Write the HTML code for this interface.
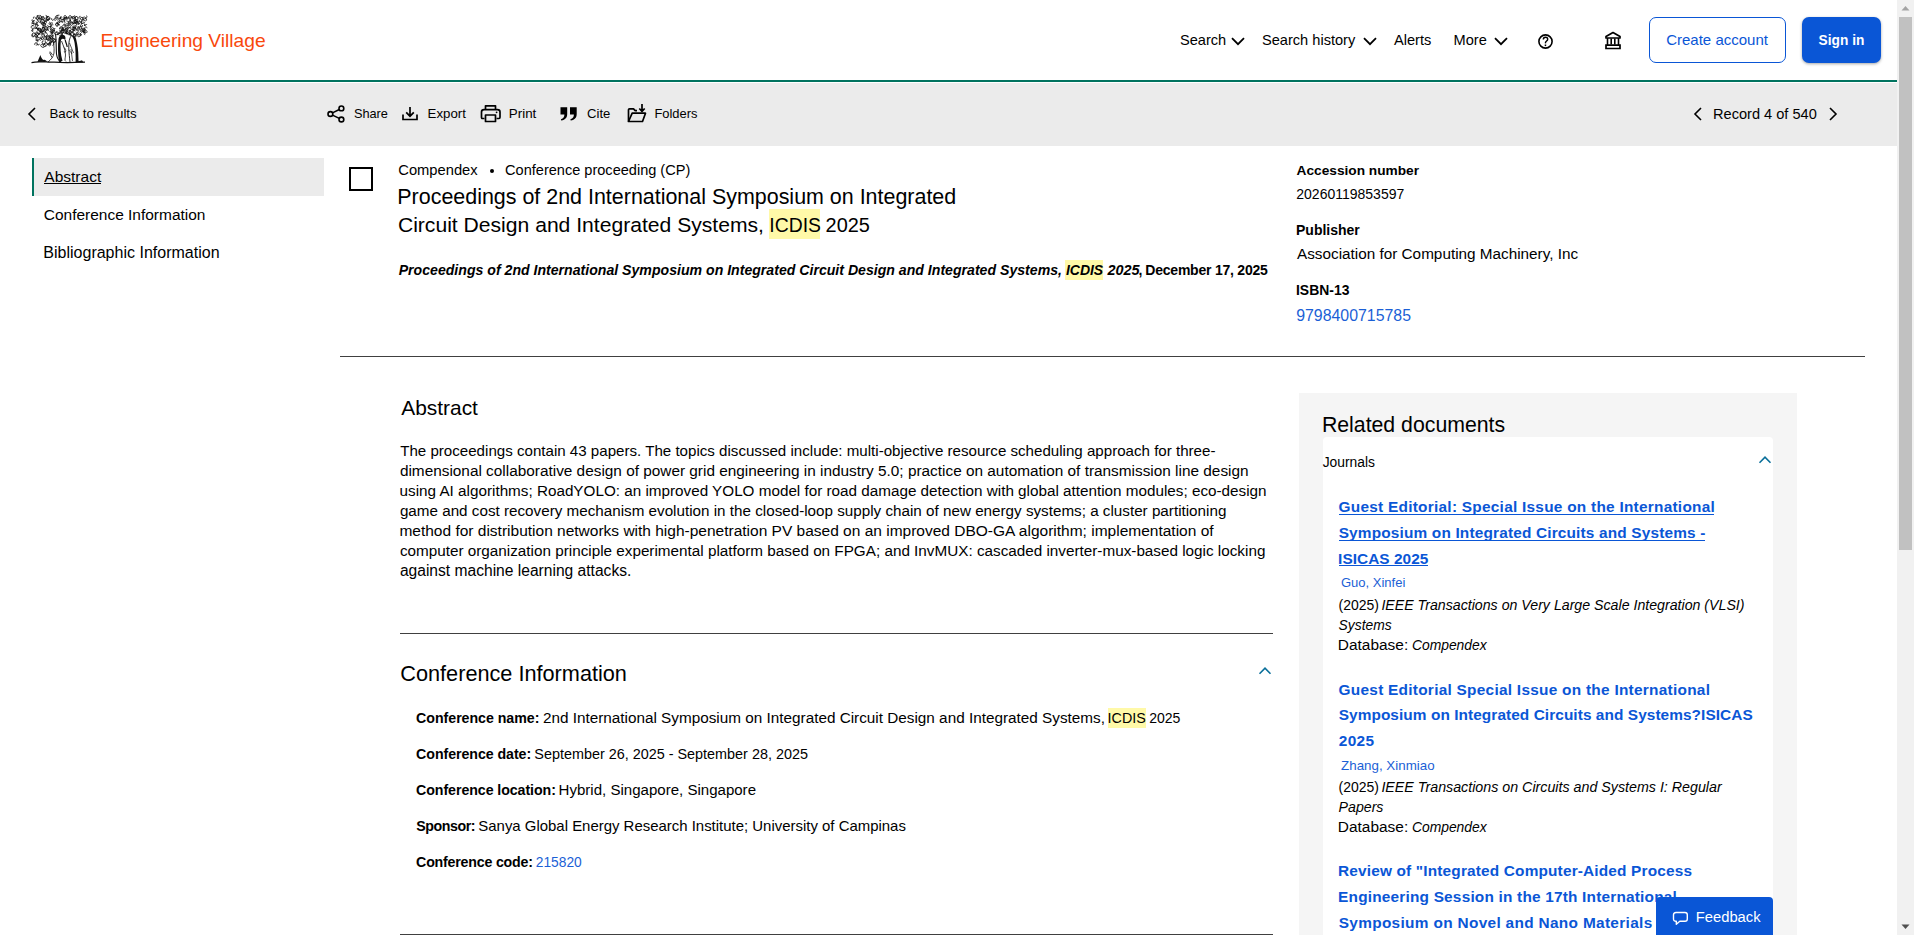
<!DOCTYPE html>
<html><head><meta charset="utf-8"><title>Engineering Village</title>
<style>
html,body{margin:0;padding:0;width:1914px;height:935px;overflow:hidden;background:#fff}
body{position:relative;font-family:"Liberation Sans",sans-serif;color:#000000}
.t{position:absolute;white-space:pre}
.r{position:absolute}
</style></head><body>
<div class="r" style="left:0px;top:80px;width:1897px;height:2px;background:#00735f"></div>
<div class="r" style="left:0px;top:83px;width:1897px;height:63px;background:#ebebeb"></div>
<svg class="r" style="left:30px;top:14px" width="60" height="52" viewBox="0 0 60 52">
<path d="M26.8 20.7A1.3 1.3 0 1 1 28.1 19.9M52.1 15.4A1.3 1.3 0 1 1 51.6 16.1M28.8 19.8A1.2 1.2 0 1 1 29.4 21.3M10.5 18.7A1.8 1.8 0 1 1 13.9 18.3M7.9 10.7A1.0 1.0 0 0 1 6.6 12.2M6.1 26.7A1.0 1.0 0 1 1 7.1 28.1M39.7 4.8A1.6 1.6 0 1 1 41.5 4.1M31.3 4.8A1.0 1.0 0 1 1 32.0 3.6M12.1 10.4A1.0 1.0 0 1 1 13.3 9.9M3.3 17.9A1.6 1.6 0 1 1 4.1 14.8M27.0 9.4A1.3 1.3 0 1 1 26.5 11.7M19.1 8.1A1.0 1.0 0 1 1 18.5 9.7M19.6 3.5A1.8 1.8 0 1 1 18.4 2.4M44.6 13.1A1.3 1.3 0 1 1 43.1 15.3M47.6 14.7A1.2 1.2 0 1 1 48.5 15.2M52.1 18.4A1.8 1.8 0 1 1 53.2 15.2M55.1 15.3A1.3 1.3 0 1 1 57.2 14.2M6.5 22.7A1.3 1.3 0 1 1 7.0 20.7M43.2 9.9A1.7 1.7 0 1 1 43.7 11.7M7.4 13.6A1.5 1.5 0 1 1 8.2 11.9M8.1 11.4A1.8 1.8 0 0 1 8.3 7.9M6.2 3.5A1.4 1.4 0 1 1 7.6 5.3M44.7 6.0A1.9 1.9 0 1 1 44.0 8.0M31.8 15.6A1.0 1.0 0 1 1 32.2 16.7M13.3 25.2A1.0 1.0 0 1 1 13.1 23.9M10.8 22.9A1.8 1.8 0 1 1 9.9 20.3M8.4 14.0A1.0 1.0 0 1 1 7.4 15.2M13.9 11.5A1.1 1.1 0 1 1 14.9 10.4M18.9 28.0A1.4 1.4 0 1 1 17.7 30.4M14.8 14.0A1.2 1.2 0 1 1 13.3 13.0M12.4 9.7A1.4 1.4 0 1 1 13.3 11.3M45.9 11.4A1.6 1.6 0 1 1 42.9 11.8M17.4 2.8A1.7 1.7 0 1 1 16.6 4.4M7.8 18.6A1.7 1.7 0 1 1 6.2 18.5M14.2 19.2A1.9 1.9 0 1 1 14.6 22.3M23.0 14.5A1.6 1.6 0 1 1 21.0 16.7M55.6 18.0A1.3 1.3 0 1 1 55.9 16.4M10.7 8.1A1.9 1.9 0 1 1 13.6 5.6M14.7 8.4A1.1 1.1 0 1 1 16.8 7.9M14.6 32.1A1.9 1.9 0 1 1 11.6 30.0M49.9 19.9A1.0 1.0 0 1 1 49.6 21.1M26.2 5.6A1.1 1.1 0 1 1 24.9 4.2M16.4 23.0A1.5 1.5 0 0 1 14.1 24.9M16.5 28.5A1.0 1.0 0 1 1 16.0 26.5M34.6 10.0A1.1 1.1 0 1 1 33.8 11.6M12.1 25.4A1.1 1.1 0 1 1 11.7 23.2M5.8 8.0A1.1 1.1 0 1 1 5.2 10.0M36.4 9.4A1.4 1.4 0 1 1 34.4 10.9M53.3 7.6A1.2 1.2 0 1 1 52.4 7.2M1.7 10.0A1.2 1.2 0 1 1 1.8 10.9M26.8 5.2A1.4 1.4 0 0 1 26.0 2.6M12.3 11.7A1.8 1.8 0 1 1 10.1 14.3M32.0 5.9A1.4 1.4 0 1 1 34.7 6.8M20.9 28.0A1.9 1.9 0 1 1 22.4 31.4M39.1 20.3A0.9 0.9 0 1 1 40.8 20.6M9.3 1.4A1.7 1.7 0 1 1 8.2 3.8M3.8 22.6A1.1 1.1 0 1 1 3.1 20.7M6.9 18.1A1.2 1.2 0 1 1 5.0 18.6M22.9 23.2A1.5 1.5 0 1 1 19.9 22.7M25.8 27.7A1.4 1.4 0 1 1 26.3 26.0M49.9 18.9A0.9 0.9 0 1 1 48.9 19.0M37.9 14.7A1.7 1.7 0 1 1 35.3 12.5M7.7 22.7A1.6 1.6 0 1 1 6.5 20.2M43.4 13.7A1.4 1.4 0 1 1 41.3 12.9M41.8 21.7A1.8 1.8 0 1 1 43.8 21.0M7.7 24.6A1.3 1.3 0 0 1 5.5 26.0M4.1 22.3A1.7 1.7 0 1 1 5.0 19.6M29.2 10.3A1.4 1.4 0 1 1 29.9 8.9M40.0 18.5A1.2 1.2 0 0 1 40.7 16.2M17.4 23.3A1.2 1.2 0 1 1 18.7 24.2M12.7 6.1A1.3 1.3 0 0 1 13.7 8.4M18.7 23.0A1.3 1.3 0 1 1 19.3 23.7M11.9 13.9A1.7 1.7 0 0 1 14.3 16.4M50.1 12.7A1.3 1.3 0 1 1 50.3 15.2M32.7 12.2A1.5 1.5 0 0 1 35.3 11.0M10.1 15.6A1.9 1.9 0 1 1 8.5 19.0M16.8 8.7A1.5 1.5 0 1 1 18.5 6.4M26.4 11.9A1.4 1.4 0 1 1 27.9 9.6M13.1 13.7A1.3 1.3 0 1 1 14.0 16.1M36.3 16.2A1.1 1.1 0 1 1 35.9 18.3M17.6 27.3A1.8 1.8 0 1 1 18.4 29.6M6.7 1.9A1.2 1.2 0 0 1 5.6 4.1M50.9 3.9A1.0 1.0 0 1 1 50.6 2.4M41.7 21.1A1.6 1.6 0 1 1 41.5 18.2M17.5 25.6A1.7 1.7 0 0 1 20.5 27.4M3.7 7.2A1.1 1.1 0 1 1 2.4 5.3M28.2 3.3A1.3 1.3 0 1 1 28.2 2.2M46.3 9.3A1.3 1.3 0 1 1 47.7 10.7M10.5 2.0A1.7 1.7 0 1 1 8.2 4.1M35.6 16.5A1.2 1.2 0 0 1 37.4 14.9M39.2 6.9A1.3 1.3 0 1 1 38.5 7.5M27.2 6.1A1.7 1.7 0 1 1 26.9 8.7M2.1 17.4A0.9 0.9 0 1 1 3.4 16.2M42.5 8.5A1.6 1.6 0 1 1 41.0 6.0M17.3 11.3A1.4 1.4 0 1 1 15.8 11.9M41.2 19.4A1.5 1.5 0 1 1 41.8 17.6M21.9 26.0A1.8 1.8 0 1 1 24.7 28.0M52.7 5.8A1.4 1.4 0 1 1 53.0 3.9M7.3 15.9A1.9 1.9 0 1 1 8.8 17.9M23.3 21.3A1.7 1.7 0 1 1 24.3 20.3M54.4 17.8A1.5 1.5 0 0 1 53.3 15.0M36.8 7.8A1.1 1.1 0 1 1 37.3 9.3M14.8 29.4A1.2 1.2 0 1 1 12.5 29.6M20.6 31.2A1.4 1.4 0 1 1 21.0 30.2M49.9 12.2A1.0 1.0 0 1 1 48.2 12.2M5.2 15.1A1.5 1.5 0 1 1 7.6 16.7M30.6 2.8A1.8 1.8 0 1 1 29.4 1.2M47.6 5.0A1.5 1.5 0 1 1 47.9 3.4M46.9 6.6A1.2 1.2 0 1 1 44.9 7.7M21.1 25.1A1.5 1.5 0 1 1 19.5 27.6M11.0 7.3A1.4 1.4 0 0 1 8.3 6.3M55.1 17.2A1.1 1.1 0 1 1 54.7 16.4M53.7 6.1A1.6 1.6 0 1 1 55.7 5.2M13.0 19.4A1.6 1.6 0 1 1 15.6 19.2M19.7 24.8A1.7 1.7 0 1 1 16.3 24.1M38.0 19.3A1.4 1.4 0 1 1 37.2 16.8M49.1 20.7A1.5 1.5 0 1 1 49.3 18.2M18.1 13.3A1.2 1.2 0 1 1 19.8 14.8M15.0 28.7A1.5 1.5 0 1 1 13.8 26.9M56.3 18.0A1.0 1.0 0 1 1 54.8 17.3M32.4 9.0A1.4 1.4 0 1 1 34.4 9.3M31.6 16.0A1.6 1.6 0 1 1 29.9 17.2M36.7 2.8A1.4 1.4 0 1 1 35.8 1.6M53.8 18.9A1.8 1.8 0 1 1 57.0 18.5M25.2 26.0A1.5 1.5 0 1 1 22.8 26.1M31.7 17.8A1.4 1.4 0 1 1 32.7 18.6M41.2 4.5A1.2 1.2 0 1 1 40.5 3.0M31.4 13.0A1.8 1.8 0 1 1 29.9 15.5M16.3 18.2A1.7 1.7 0 1 1 18.5 16.8M9.7 16.1A1.0 1.0 0 1 1 9.1 14.5M27.1 12.7A1.4 1.4 0 0 1 29.1 10.8M11.0 20.9A1.6 1.6 0 1 1 13.9 21.9M51.9 6.8A1.2 1.2 0 1 1 54.0 5.6M45.7 2.2A1.0 1.0 0 1 1 45.1 1.8M13.7 7.9A1.6 1.6 0 1 1 11.1 9.1M40.1 13.7A1.7 1.7 0 1 1 41.5 12.0M22.7 20.4A1.5 1.5 0 0 1 20.4 22.1M9.0 25.8A1.7 1.7 0 1 1 8.4 23.1M10.6 17.8A1.9 1.9 0 1 1 7.0 17.2M15.2 9.2A1.2 1.2 0 0 1 16.1 7.0M31.9 13.9A1.8 1.8 0 1 1 29.5 16.2M21.6 14.2A1.3 1.3 0 0 1 23.9 15.2M31.9 6.4A0.9 0.9 0 1 1 30.2 7.1M14.5 21.0A1.4 1.4 0 1 1 13.8 20.3M37.5 19.7A1.4 1.4 0 1 1 37.4 17.1M50.3 19.9A1.8 1.8 0 1 1 47.2 21.7M48.1 10.6A1.7 1.7 0 1 1 50.9 9.3M52.4 11.1A1.1 1.1 0 1 1 51.8 10.7M18.6 29.8A1.1 1.1 0 1 1 19.9 31.5M52.5 6.7A1.8 1.8 0 0 1 49.1 5.7M14.5 26.0A1.6 1.6 0 1 1 16.0 25.9M15.9 3.3A1.8 1.8 0 1 1 16.6 6.7M49.2 14.5A1.6 1.6 0 1 1 46.4 14.3M45.6 6.9A1.0 1.0 0 1 1 45.8 5.0M24.7 24.8A1.6 1.6 0 1 1 23.9 21.7M2.4 7.3A1.1 1.1 0 1 1 1.9 8.5M54.6 4.5A1.3 1.3 0 1 1 54.0 5.6M12.6 5.7A1.5 1.5 0 1 1 12.9 2.8M6.9 1.6A1.8 1.8 0 1 1 8.0 5.0M33.6 18.8A1.5 1.5 0 1 1 33.9 17.7M32.0 6.3A1.3 1.3 0 1 1 33.6 7.8M11.4 7.8A0.9 0.9 0 1 1 12.6 9.2M53.4 3.9A1.2 1.2 0 0 1 52.7 6.1M20.0 15.3A1.2 1.2 0 1 1 19.5 17.6M29.2 15.0A1.2 1.2 0 1 1 31.4 15.9M13.8 15.9A1.8 1.8 0 0 1 10.3 16.7M42.7 13.2A1.4 1.4 0 1 1 41.7 15.6M10.9 7.1A1.8 1.8 0 1 1 14.5 7.4M35.7 13.4A1.5 1.5 0 1 1 36.6 16.0M35.3 16.1A1.6 1.6 0 1 1 33.5 18.0M17.0 29.1A1.4 1.4 0 1 1 15.0 29.5M48.2 14.1A1.4 1.4 0 1 1 45.4 14.8M44.9 16.0A1.7 1.7 0 1 1 45.3 13.4M40.7 4.6A1.1 1.1 0 1 1 41.9 5.3M21.2 14.9A1.7 1.7 0 1 1 19.9 17.9M2.8 14.4A1.4 1.4 0 1 1 3.8 12.4M16.1 31.6A1.4 1.4 0 1 1 14.7 29.9M37.2 11.8A1.6 1.6 0 1 1 37.3 13.4M38.9 20.5A1.1 1.1 0 0 1 37.4 19.0M30.0 14.6A1.4 1.4 0 1 1 32.6 14.7M56.3 1.6A1.2 1.2 0 0 1 55.7 3.9M14.5 13.7A1.8 1.8 0 1 1 16.0 16.3M4.9 9.7A1.7 1.7 0 1 1 4.8 6.4M23.8 5.4A1.2 1.2 0 1 1 21.8 4.2M14.3 29.8A1.5 1.5 0 1 1 17.1 30.9M33.5 18.5A1.5 1.5 0 1 1 33.5 16.9M55.2 20.7A1.1 1.1 0 1 1 55.3 18.5M47.3 3.0A1.6 1.6 0 1 1 45.4 3.2M10.0 17.1A1.0 1.0 0 1 1 11.8 16.7M12.4 17.2A1.1 1.1 0 0 1 10.3 17.8M35.7 2.4A1.4 1.4 0 1 1 34.8 2.7M53.0 15.3A1.0 1.0 0 1 1 54.1 16.1M22.2 11.8A0.9 0.9 0 1 1 22.9 11.3M37.2 20.0A1.0 1.0 0 1 1 39.1 19.2M18.8 24.8A1.3 1.3 0 0 1 16.3 23.9M15.6 1.4A1.9 1.9 0 1 1 13.6 2.9M10.6 26.5A1.1 1.1 0 1 1 11.7 25.0M42.1 3.8A1.1 1.1 0 1 1 42.7 4.6M5.4 31.2A1.3 1.3 0 1 1 6.3 31.3M27.1 17.2A1.5 1.5 0 1 1 24.9 15.5M57.0 10.1A1.5 1.5 0 1 1 54.7 8.3M42.8 15.3A1.6 1.6 0 1 1 40.3 15.8M33.5 6.0A1.8 1.8 0 1 1 36.7 6.5M35.1 17.3A1.7 1.7 0 1 1 37.1 17.7M12.6 4.5A1.1 1.1 0 1 1 14.0 2.8M31.8 7.1A1.4 1.4 0 1 1 30.6 4.5M26.0 10.4A1.1 1.1 0 1 1 28.1 10.5M35.4 14.9A1.3 1.3 0 1 1 33.9 13.7M45.3 20.1A1.8 1.8 0 1 1 45.5 16.9M42.0 8.5A1.0 1.0 0 1 1 42.1 10.3M9.4 29.8A1.2 1.2 0 1 1 7.1 29.3M44.2 22.1A1.2 1.2 0 1 1 45.1 22.5M21.6 12.0A1.6 1.6 0 1 1 22.9 9.3M40.6 19.1A1.1 1.1 0 1 1 38.7 19.2M43.2 6.2A1.7 1.7 0 1 1 41.9 7.1M3.8 4.7A0.9 0.9 0 1 1 5.0 3.5M17.6 14.5A1.0 1.0 0 1 1 15.9 15.3M34.6 5.0A1.7 1.7 0 0 1 38.0 5.1M31.9 5.5A1.3 1.3 0 0 1 31.4 3.0M5.9 22.4A1.1 1.1 0 0 1 7.7 23.3M21.4 17.4A1.2 1.2 0 1 1 23.4 17.6M13.3 11.7A1.0 1.0 0 1 1 13.5 13.7M5.3 4.3A1.6 1.6 0 1 1 6.8 7.2M46.3 22.4A1.1 1.1 0 1 1 47.6 21.6M43.3 9.5A1.3 1.3 0 1 1 44.5 9.9" fill="none" stroke="#111" stroke-width="0.8"/>
<g fill="#111"><circle cx="15.0" cy="11.2" r="0.7"/><circle cx="14.4" cy="4.1" r="0.5"/><circle cx="36.4" cy="18.8" r="0.9"/><circle cx="54.7" cy="11.3" r="0.8"/><circle cx="51.7" cy="9.1" r="0.8"/><circle cx="49.0" cy="9.6" r="0.8"/><circle cx="7.8" cy="15.0" r="0.7"/><circle cx="6.2" cy="13.7" r="0.7"/><circle cx="29.3" cy="10.8" r="0.6"/><circle cx="24.3" cy="16.3" r="0.6"/><circle cx="38.3" cy="9.7" r="0.5"/><circle cx="21.1" cy="14.8" r="0.6"/><circle cx="4.2" cy="14.0" r="0.7"/><circle cx="6.3" cy="14.3" r="0.5"/><circle cx="29.3" cy="19.4" r="0.7"/><circle cx="20.3" cy="10.1" r="0.5"/><circle cx="21.4" cy="28.0" r="0.8"/><circle cx="16.9" cy="21.7" r="0.6"/><circle cx="27.9" cy="20.2" r="1.0"/><circle cx="22.2" cy="19.1" r="1.0"/><circle cx="43.9" cy="20.6" r="0.8"/><circle cx="24.8" cy="14.6" r="0.6"/><circle cx="23.2" cy="28.5" r="0.5"/><circle cx="10.2" cy="17.2" r="0.7"/><circle cx="10.9" cy="8.4" r="0.6"/><circle cx="39.0" cy="9.6" r="0.5"/><circle cx="31.8" cy="14.0" r="0.6"/><circle cx="32.1" cy="20.5" r="0.8"/><circle cx="20.7" cy="12.7" r="0.9"/><circle cx="19.6" cy="23.0" r="0.8"/><circle cx="46.7" cy="7.5" r="0.8"/><circle cx="29.0" cy="18.8" r="0.7"/><circle cx="18.1" cy="24.0" r="0.8"/><circle cx="15.6" cy="10.0" r="0.7"/><circle cx="12.4" cy="17.4" r="0.6"/><circle cx="6.4" cy="4.9" r="0.6"/><circle cx="40.4" cy="6.2" r="0.7"/><circle cx="43.9" cy="16.5" r="0.6"/><circle cx="5.8" cy="10.1" r="0.8"/><circle cx="45.2" cy="14.0" r="0.9"/><circle cx="16.3" cy="23.0" r="0.7"/><circle cx="20.7" cy="24.3" r="0.9"/><circle cx="46.9" cy="18.9" r="0.7"/><circle cx="40.5" cy="20.4" r="0.9"/><circle cx="45.5" cy="6.5" r="0.7"/></g>
<g fill="none" stroke="#111">
<path d="M25.5 20 C26.5 26 26 34 26.5 40 C27 44 28.5 46.5 31 48" stroke-width="1.1"/>
<path d="M22 22 C23.5 28 24.5 33 24 39 C23.5 43 21 45.5 18 48" stroke-width="0.8"/>
<path d="M19.5 38.5 L22 43.5 M22.5 41 L20 37.5" stroke-width="0.8"/>
<path d="M29 48 C27.8 40 27.6 31 28.6 24.5 C29.3 21 32 19.8 34.2 21.3 C35.6 22.4 35.8 24.5 35.2 26 C33 24 31.2 24.5 30.8 27 C30.2 33 30.5 40 32.5 47 Z" fill="#111" stroke="none"/>
<path d="M35.2 26 C36 29 37 31 37.2 33" stroke-width="1.2"/>
<path d="M31.5 27 C33 31 35.5 36 35.5 41 C35.5 44 34 46.5 36 47.5" stroke-width="0.8"/>
<path d="M33.5 33 C35 34 36.5 36 35.5 38 C34.5 38.8 33.8 37.8 34.6 37.2" stroke-width="0.7"/>
<path d="M41.5 21.5 C44 20.8 45.8 22.5 46.2 25.5 C47.6 31 48.4 37 48.4 43 L48.6 48 L45.6 48 C45.8 42 45.6 35 44.6 29 C44.2 26 43.2 24 41.5 21.5 Z" fill="#111" stroke="none"/>
<path d="M41.5 21.5 C39.2 24 38.6 29 38.8 34 C39 39 39.5 44 40 48" stroke-width="0.9"/>
<path d="M39.5 29 L43.5 39 M41 35 L42.5 47 M38.5 36 C40 37 41 38 42 40" stroke-width="0.7"/>
<path d="M1.5 48.6 C6 47.6 10 48 14 47.6 C20 48.4 26 48 30 48.4 C38 48.8 48 48.4 55 48.1" stroke-width="1.2"/>
</g>
<path d="M7.5 48 C8.5 45 9.5 43 10.5 41 C11 43.5 12 45 13.5 46 C15 45 16 46.5 17.5 47.5 Z" fill="#111"/>
<path d="M46.5 48 C48 46.5 50 47.2 52 46.2 L53.5 48.4 Z" fill="#111"/>
</svg>

<svg class="r" style="left:1231px;top:36.7px" width="14" height="9" viewBox="0 0 14 9"><path d="M1 1.2 L7 7.2 L13 1.2" fill="none" stroke="#000000" stroke-width="1.8"/></svg>
<svg class="r" style="left:1363px;top:36.7px" width="14" height="9" viewBox="0 0 14 9"><path d="M1 1.2 L7 7.2 L13 1.2" fill="none" stroke="#000000" stroke-width="1.8"/></svg>
<svg class="r" style="left:1494px;top:36.7px" width="14" height="9" viewBox="0 0 14 9"><path d="M1 1.2 L7 7.2 L13 1.2" fill="none" stroke="#000000" stroke-width="1.8"/></svg>
<svg class="r" style="left:1536px;top:32px" width="19" height="19" viewBox="0 0 19 19"><circle cx="9.5" cy="9.5" r="6.6" fill="none" stroke="#000000" stroke-width="1.6"/><path d="M7.3 7.4 C7.3 5.9 8.3 5.2 9.5 5.2 C10.8 5.2 11.7 6 11.7 7.2 C11.7 8.6 10.1 9 9.6 10.2 L9.4 11.4" fill="none" stroke="#000000" stroke-width="1.4"/><rect x="8.7" y="12.5" width="1.5" height="1.6" fill="#000000"/></svg>
<svg class="r" style="left:1604px;top:31px" width="18" height="19" viewBox="0 0 18 19"><path d="M9 1.5 L16 5.6 L16 7 L2 7 L2 5.6 Z" fill="none" stroke="#000000" stroke-width="1.7" stroke-linejoin="round"/><path d="M3.5 7 V14 M14.5 7 V14 M7.2 7.5 V13.5 M10.8 7.5 V13.5" stroke="#000000" stroke-width="1.6"/><path d="M2 14.2 H16 V17.5 H2 Z" fill="none" stroke="#000000" stroke-width="1.7"/></svg>
<div class="r" style="left:1649px;top:17px;width:137px;height:46px;border:1px solid #0a56d6;border-radius:7px;box-sizing:border-box;background:#fff"></div>
<div class="r" style="left:1802px;top:17px;width:79px;height:46px;background:#0a56d6;border-radius:7px;box-shadow:0 1px 3px rgba(0,0,0,.35)"></div>
<svg class="r" style="left:27px;top:107px" width="10" height="14" viewBox="0 0 10 14"><path d="M8 1 L2 7 L8 13" fill="none" stroke="#000000" stroke-width="1.6"/></svg>
<svg class="r" style="left:326px;top:104px" width="20" height="20" viewBox="0 0 20 20"><g fill="none" stroke="#000000" stroke-width="1.6"><circle cx="15.4" cy="4.4" r="2.4"/><circle cx="4.4" cy="10" r="2.4"/><circle cx="15.4" cy="15.5" r="2.4"/><path d="M6.5 8.9 L13.3 5.5 M6.5 11.1 L13.3 14.4"/></g></svg>
<svg class="r" style="left:401px;top:106px" width="18" height="16" viewBox="0 0 18 16"><g fill="none" stroke="#000000" stroke-width="1.7"><path d="M2 8.5 V13.5 H16 V8.5"/><path d="M9 1 V10 M5.2 6.4 L9 10.2 L12.8 6.4"/></g></svg>
<svg class="r" style="left:480px;top:104px" width="22" height="19" viewBox="0 0 22 19"><g fill="none" stroke="#000000" stroke-width="1.7" stroke-linejoin="round"><path d="M5.5 5.5 V1.8 H15.5 V5.5"/><path d="M4.5 14.5 H2.5 C1.8 14.5 1.5 14 1.5 13.3 V8 C1.5 6.5 2.5 5.6 4 5.6 H17.5 C19 5.6 20 6.5 20 8 V13.3 C20 14 19.6 14.5 19 14.5 H16.5"/><path d="M5.5 11 H15.5 V17.5 H5.5 Z"/></g><circle cx="16.6" cy="8.3" r="0.9" fill="#000000"/></svg>
<svg class="r" style="left:559px;top:106px" width="20" height="16" viewBox="0 0 20 16"><path d="M1.5 1.3 H8.2 V8 C8.2 11.7 6.5 13.6 2.2 14.6 L1.9 13.2 C4.5 12.5 5.3 11.2 5.4 8.6 H1.5 Z M11 1.3 H17.7 V8 C17.7 11.7 16 13.6 11.7 14.6 L11.4 13.2 C14 12.5 14.8 11.2 14.9 8.6 H11 Z" fill="#000000"/></svg>
<svg class="r" style="left:626px;top:103px" width="22" height="21" viewBox="0 0 22 21"><g fill="none" stroke="#000000" stroke-width="1.7" stroke-linejoin="round"><path d="M2.5 18.5 V6.8 C2.5 6.2 2.9 5.8 3.5 5.8 H7.5 L9.2 7.6 H11"/><path d="M2.5 18.5 H16.5 L19.5 10.2 H6.2 Z"/><path d="M16 1 V8.2 M13.3 5.5 L16 8.3 L18.7 5.5"/></g></svg>
<svg class="r" style="left:1693px;top:106.5px" width="10" height="14" viewBox="0 0 10 14"><path d="M8 1 L2 7 L8 13" fill="none" stroke="#000000" stroke-width="1.6"/></svg>
<svg class="r" style="left:1828px;top:106.5px" width="10" height="14" viewBox="0 0 10 14"><path d="M2 1 L8 7 L2 13" fill="none" stroke="#000000" stroke-width="1.6"/></svg>
<div class="r" style="left:32px;top:158px;width:292px;height:38px;background:#ebebeb;border-left:2px solid #00735f;box-sizing:border-box"></div>
<div class="r" style="left:44px;top:183px;width:57px;height:1px;background:#000000"></div>
<div class="r" style="left:349px;top:167px;width:24px;height:24px;border:2px solid #000000;box-sizing:border-box"></div>
<div class="r" style="left:490px;top:168.5px;width:4px;height:4px;border-radius:2px;background:#000000"></div>
<div class="r" style="left:769px;top:209px;width:51px;height:30px;background:#fff9a8"></div>
<div class="r" style="left:1065px;top:260px;width:38px;height:20px;background:#fff9a8"></div>
<div class="r" style="left:340px;top:356px;width:1525px;height:1px;background:#404040"></div>
<div class="r" style="left:400px;top:633px;width:873px;height:1px;background:#404040"></div>
<svg class="r" style="left:1257px;top:665px" width="16" height="10" viewBox="0 0 16 10"><path d="M2.5 8.7 L8 3.2 L13.5 8.7" fill="none" stroke="#0a6f9a" stroke-width="1.6"/></svg>
<div class="r" style="left:1108px;top:708px;width:38px;height:20px;background:#fff9a8"></div>
<div class="r" style="left:400px;top:934px;width:873px;height:1px;background:#404040"></div>
<div class="r" style="left:1299px;top:393px;width:498px;height:542px;background:#f5f5f5"></div>
<div class="r" style="left:1323px;top:437px;width:450px;height:498px;background:#fff;border-radius:4px 4px 0 0"></div>
<svg class="r" style="left:1757px;top:454px" width="16" height="10" viewBox="0 0 16 10"><path d="M2.5 8.7 L8 3.2 L13.5 8.7" fill="none" stroke="#0a6f9a" stroke-width="1.6"/></svg>
<div class="r" style="left:1339px;top:514px;width:375px;height:1px;background:#0a56d6"></div>
<div class="r" style="left:1339px;top:540px;width:366px;height:1px;background:#0a56d6"></div>
<div class="r" style="left:1339px;top:565px;width:89px;height:1px;background:#0a56d6"></div>
<div class="t" style="left:100.5px;top:26px;font-size:19.22px;line-height:30px;font-weight:400;font-style:normal;color:#f9480c;">Engineering Village</div>
<div class="t" style="left:1180.0px;top:25px;font-size:14.60px;line-height:30px;font-weight:400;font-style:normal;color:#000000;">Search</div>
<div class="t" style="left:1262.0px;top:25px;font-size:14.60px;line-height:30px;font-weight:400;font-style:normal;color:#000000;">Search history</div>
<div class="t" style="left:1394.0px;top:25px;font-size:14.60px;line-height:30px;font-weight:400;font-style:normal;color:#000000;">Alerts</div>
<div class="t" style="left:1453.5px;top:25px;font-size:14.60px;line-height:30px;font-weight:400;font-style:normal;color:#000000;">More</div>
<div class="t" style="left:1666.2px;top:25px;font-size:15.01px;line-height:30px;font-weight:400;font-style:normal;color:#0a56d6;">Create account</div>
<div class="t" style="left:1818.6px;top:26px;font-size:13.73px;line-height:30px;font-weight:700;font-style:normal;color:#fff;">Sign in</div>
<div class="t" style="left:49.5px;top:99px;font-size:13.31px;line-height:30px;font-weight:400;font-style:normal;color:#000000;">Back to results</div>
<div class="t" style="left:353.9px;top:99px;font-size:12.75px;line-height:30px;font-weight:400;font-style:normal;color:#000000;">Share</div>
<div class="t" style="left:427.6px;top:99px;font-size:13.25px;line-height:30px;font-weight:400;font-style:normal;color:#000000;">Export</div>
<div class="t" style="left:508.8px;top:99px;font-size:13.40px;line-height:30px;font-weight:400;font-style:normal;color:#000000;">Print</div>
<div class="t" style="left:587.1px;top:99px;font-size:13.08px;line-height:30px;font-weight:400;font-style:normal;color:#000000;">Cite</div>
<div class="t" style="left:654.4px;top:99px;font-size:12.92px;line-height:30px;font-weight:400;font-style:normal;color:#000000;">Folders</div>
<div class="t" style="left:1713.0px;top:99px;font-size:14.59px;line-height:30px;font-weight:400;font-style:normal;color:#000000;">Record 4 of 540</div>
<div class="t" style="left:44.3px;top:162px;font-size:15.52px;line-height:30px;font-weight:400;font-style:normal;color:#000000;">Abstract</div>
<div class="t" style="left:43.8px;top:200px;font-size:15.48px;line-height:30px;font-weight:400;font-style:normal;color:#000000;">Conference Information</div>
<div class="t" style="left:43.3px;top:237px;font-size:16.02px;line-height:30px;font-weight:400;font-style:normal;color:#000000;">Bibliographic Information</div>
<div class="t" style="left:398.3px;top:155px;font-size:14.73px;line-height:30px;font-weight:400;font-style:normal;color:#000000;">Compendex</div>
<div class="t" style="left:505.1px;top:155px;font-size:14.56px;line-height:30px;font-weight:400;font-style:normal;color:#000000;">Conference proceeding (CP)</div>
<div class="t" style="left:397.3px;top:182px;font-size:21.44px;line-height:30px;font-weight:400;font-style:normal;color:#000000;">Proceedings of 2nd International Symposium on Integrated</div>
<div class="t" style="left:397.9px;top:210px;font-size:21.12px;line-height:30px;font-weight:400;font-style:normal;color:#000000;">Circuit Design and Integrated Systems,</div>
<div class="t" style="left:769.3px;top:210px;font-size:19.37px;line-height:30px;font-weight:400;font-style:normal;color:#000000;">ICDIS</div>
<div class="t" style="left:825.6px;top:210px;font-size:19.91px;line-height:30px;font-weight:400;font-style:normal;color:#000000;">2025</div>
<div class="t" style="left:398.7px;top:255px;font-size:14.11px;line-height:30px;font-weight:700;font-style:italic;color:#000000;">Proceedings of 2nd International Symposium on Integrated Circuit Design and Integrated Systems,</div>
<div class="t" style="left:1065.9px;top:255px;font-size:13.99px;line-height:30px;font-weight:700;font-style:italic;color:#000000;">ICDIS</div>
<div class="t" style="left:1107.4px;top:255px;font-size:14.42px;line-height:30px;font-weight:700;font-style:italic;color:#000000;">2025</div>
<div class="t" style="left:1138.5px;top:255px;font-size:14.00px;line-height:30px;font-weight:700;font-style:normal;color:#000000;">,</div>
<div class="t" style="left:1145.3px;top:255px;font-size:14.00px;line-height:30px;font-weight:700;font-style:normal;color:#000000;letter-spacing:-0.221px;">December 17, 2025</div>
<div class="t" style="left:1296.6px;top:156px;font-size:13.69px;line-height:30px;font-weight:700;font-style:normal;color:#000000;">Accession number</div>
<div class="t" style="left:1296.3px;top:179px;font-size:14.01px;line-height:30px;font-weight:400;font-style:normal;color:#000000;">20260119853597</div>
<div class="t" style="left:1296.0px;top:215px;font-size:14.00px;line-height:30px;font-weight:700;font-style:normal;color:#000000;">Publisher</div>
<div class="t" style="left:1297.0px;top:239px;font-size:15.31px;line-height:30px;font-weight:400;font-style:normal;color:#000000;">Association for Computing Machinery, Inc</div>
<div class="t" style="left:1296.0px;top:275px;font-size:13.94px;line-height:30px;font-weight:700;font-style:normal;color:#000000;">ISBN-13</div>
<div class="t" style="left:1296.2px;top:301px;font-size:15.88px;line-height:30px;font-weight:400;font-style:normal;color:#1b5fd6;">9798400715785</div>
<div class="t" style="left:401.2px;top:393px;font-size:20.93px;line-height:30px;font-weight:400;font-style:normal;color:#000000;">Abstract</div>
<div class="t" style="left:400.2px;top:436px;font-size:15.11px;line-height:30px;font-weight:400;font-style:normal;color:#000000;">The proceedings contain 43 papers. The topics discussed include: multi-objective resource scheduling approach for three-</div>
<div class="t" style="left:399.9px;top:456px;font-size:15.37px;line-height:30px;font-weight:400;font-style:normal;color:#000000;">dimensional collaborative design of power grid engineering in industry 5.0; practice on automation of transmission line design</div>
<div class="t" style="left:399.6px;top:476px;font-size:15.26px;line-height:30px;font-weight:400;font-style:normal;color:#000000;">using AI algorithms; RoadYOLO: an improved YOLO model for road damage detection with global attention modules; eco-design</div>
<div class="t" style="left:399.9px;top:496px;font-size:15.22px;line-height:30px;font-weight:400;font-style:normal;color:#000000;">game and cost recovery mechanism evolution in the closed-loop supply chain of new energy systems; a cluster partitioning</div>
<div class="t" style="left:399.4px;top:516px;font-size:15.51px;line-height:30px;font-weight:400;font-style:normal;color:#000000;">method for distribution networks with high-penetration PV based on an improved DBO-GA algorithm; implementation of</div>
<div class="t" style="left:399.9px;top:536px;font-size:15.27px;line-height:30px;font-weight:400;font-style:normal;color:#000000;">computer organization principle experimental platform based on FPGA; and InvMUX: cascaded inverter-mux-based logic locking</div>
<div class="t" style="left:399.9px;top:556px;font-size:15.60px;line-height:30px;font-weight:400;font-style:normal;color:#000000;">against machine learning attacks.</div>
<div class="t" style="left:400.3px;top:659px;font-size:21.70px;line-height:30px;font-weight:400;font-style:normal;color:#000000;">Conference Information</div>
<div class="t" style="left:416.1px;top:703px;font-size:14.20px;line-height:30px;font-weight:700;font-style:normal;color:#000000;letter-spacing:-0.032px;">Conference name:</div>
<div class="t" style="left:542.9px;top:703px;font-size:15.30px;line-height:30px;font-weight:400;font-style:normal;color:#000000;">2nd International Symposium on Integrated Circuit Design and Integrated Systems,</div>
<div class="t" style="left:1107.6px;top:703px;font-size:14.31px;line-height:30px;font-weight:400;font-style:normal;color:#000000;">ICDIS</div>
<div class="t" style="left:1149.2px;top:703px;font-size:14.04px;line-height:30px;font-weight:400;font-style:normal;color:#000000;">2025</div>
<div class="t" style="left:416.1px;top:739px;font-size:14.20px;line-height:30px;font-weight:700;font-style:normal;color:#000000;letter-spacing:-0.055px;">Conference date:</div>
<div class="t" style="left:534.3px;top:739px;font-size:14.40px;line-height:30px;font-weight:400;font-style:normal;color:#000000;">September 26, 2025 - September 28, 2025</div>
<div class="t" style="left:416.1px;top:775px;font-size:14.20px;line-height:30px;font-weight:700;font-style:normal;color:#000000;letter-spacing:-0.069px;">Conference location:</div>
<div class="t" style="left:558.6px;top:775px;font-size:15.05px;line-height:30px;font-weight:400;font-style:normal;color:#000000;">Hybrid, Singapore, Singapore</div>
<div class="t" style="left:416.3px;top:811px;font-size:14.20px;line-height:30px;font-weight:700;font-style:normal;color:#000000;letter-spacing:-0.427px;">Sponsor:</div>
<div class="t" style="left:478.3px;top:811px;font-size:14.94px;line-height:30px;font-weight:400;font-style:normal;color:#000000;">Sanya Global Energy Research Institute; University of Campinas</div>
<div class="t" style="left:416.1px;top:847px;font-size:14.20px;line-height:30px;font-weight:700;font-style:normal;color:#000000;letter-spacing:-0.200px;">Conference code:</div>
<div class="t" style="left:535.8px;top:848px;font-size:13.78px;line-height:30px;font-weight:400;font-style:normal;color:#1b5fd6;">215820</div>
<div class="t" style="left:1321.9px;top:410px;font-size:21.28px;line-height:30px;font-weight:400;font-style:normal;color:#000000;">Related documents</div>
<div class="t" style="left:1322.7px;top:447px;font-size:13.84px;line-height:30px;font-weight:400;font-style:normal;color:#000000;">Journals</div>
<div class="t" style="left:1338.6px;top:492px;font-size:15.40px;line-height:30px;font-weight:700;font-style:normal;color:#0a56d6;letter-spacing:0.255px;">Guest Editorial: Special Issue on the International</div>
<div class="t" style="left:1338.7px;top:518px;font-size:15.40px;line-height:30px;font-weight:700;font-style:normal;color:#0a56d6;letter-spacing:0.165px;">Symposium on Integrated Circuits and Systems -</div>
<div class="t" style="left:1338.1px;top:544px;font-size:15.40px;line-height:30px;font-weight:700;font-style:normal;color:#0a56d6;letter-spacing:0.040px;">ISICAS 2025</div>
<div class="t" style="left:1340.9px;top:568px;font-size:13.04px;line-height:30px;font-weight:400;font-style:normal;color:#1b5fd6;">Guo, Xinfei</div>
<div class="t" style="left:1338.5px;top:590px;font-size:13.97px;line-height:30px;font-weight:400;font-style:normal;color:#000000;">(2025)</div>
<div class="t" style="left:1381.4px;top:590px;font-size:14.18px;line-height:30px;font-weight:400;font-style:italic;color:#000000;">IEEE Transactions on Very Large Scale Integration (VLSI)</div>
<div class="t" style="left:1338.6px;top:610px;font-size:13.86px;line-height:30px;font-weight:400;font-style:italic;color:#000000;">Systems</div>
<div class="t" style="left:1337.8px;top:630px;font-size:15.44px;line-height:30px;font-weight:400;font-style:normal;color:#000000;">Database:</div>
<div class="t" style="left:1411.9px;top:630px;font-size:13.89px;line-height:30px;font-weight:400;font-style:italic;color:#000000;">Compendex</div>
<div class="t" style="left:1338.6px;top:675px;font-size:15.40px;line-height:30px;font-weight:700;font-style:normal;color:#0a56d6;letter-spacing:0.265px;">Guest Editorial Special Issue on the International</div>
<div class="t" style="left:1338.7px;top:700px;font-size:15.40px;line-height:30px;font-weight:700;font-style:normal;color:#0a56d6;letter-spacing:0.071px;">Symposium on Integrated Circuits and Systems?ISICAS</div>
<div class="t" style="left:1338.7px;top:726px;font-size:15.40px;line-height:30px;font-weight:700;font-style:normal;color:#0a56d6;letter-spacing:0.394px;">2025</div>
<div class="t" style="left:1341.1px;top:751px;font-size:13.35px;line-height:30px;font-weight:400;font-style:normal;color:#1b5fd6;">Zhang, Xinmiao</div>
<div class="t" style="left:1338.5px;top:772px;font-size:13.97px;line-height:30px;font-weight:400;font-style:normal;color:#000000;">(2025)</div>
<div class="t" style="left:1381.4px;top:772px;font-size:14.26px;line-height:30px;font-weight:400;font-style:italic;color:#000000;">IEEE Transactions on Circuits and Systems I: Regular</div>
<div class="t" style="left:1338.6px;top:792px;font-size:14.17px;line-height:30px;font-weight:400;font-style:italic;color:#000000;">Papers</div>
<div class="t" style="left:1337.8px;top:812px;font-size:15.44px;line-height:30px;font-weight:400;font-style:normal;color:#000000;">Database:</div>
<div class="t" style="left:1411.9px;top:812px;font-size:13.89px;line-height:30px;font-weight:400;font-style:italic;color:#000000;">Compendex</div>
<div class="t" style="left:1338.1px;top:856px;font-size:15.40px;line-height:30px;font-weight:700;font-style:normal;color:#0a56d6;letter-spacing:0.164px;">Review of "Integrated Computer-Aided Process</div>
<div class="t" style="left:1338.1px;top:882px;font-size:15.40px;line-height:30px;font-weight:700;font-style:normal;color:#0a56d6;letter-spacing:0.196px;">Engineering Session in the 17th International</div>
<div class="t" style="left:1338.7px;top:908px;font-size:15.40px;line-height:30px;font-weight:700;font-style:normal;color:#0a56d6;letter-spacing:0.323px;">Symposium on Novel and Nano Materials</div>
<div class="r" style="left:1656px;top:897px;width:117px;height:40px;background:#0a56d6;border-radius:4px 4px 0 0"></div>
<svg class="r" style="left:1672px;top:911px" width="17" height="16" viewBox="0 0 17 16"><path d="M4 1.5 H13 C14.4 1.5 15.3 2.4 15.3 3.8 V8 C15.3 9.4 14.4 10.3 13 10.3 H7.8 L4.3 13.3 V10.3 H4 C2.6 10.3 1.5 9.4 1.5 8 V3.8 C1.5 2.4 2.6 1.5 4 1.5 Z" fill="none" stroke="#fff" stroke-width="1.4" stroke-linejoin="round"/></svg>
<div class="t" style="left:1695.8px;top:902px;font-size:14.76px;line-height:30px;font-weight:400;font-style:normal;color:#fff;">Feedback</div>
<div class="r" style="left:1897px;top:0;width:17px;height:935px;background:#f1f1f1"></div>
<div class="r" style="left:1899px;top:17px;width:13px;height:533px;background:#c1c1c1"></div>
<svg class="r" style="left:1897px;top:0" width="17" height="17" viewBox="0 0 17 17"><path d="M4.5 10.5 L8.5 6 L12.5 10.5 Z" fill="#a3a3a3"/></svg>
<svg class="r" style="left:1897px;top:918px" width="17" height="17" viewBox="0 0 17 17"><path d="M4.5 6.5 L8.5 11 L12.5 6.5 Z" fill="#505050"/></svg>
</body></html>
